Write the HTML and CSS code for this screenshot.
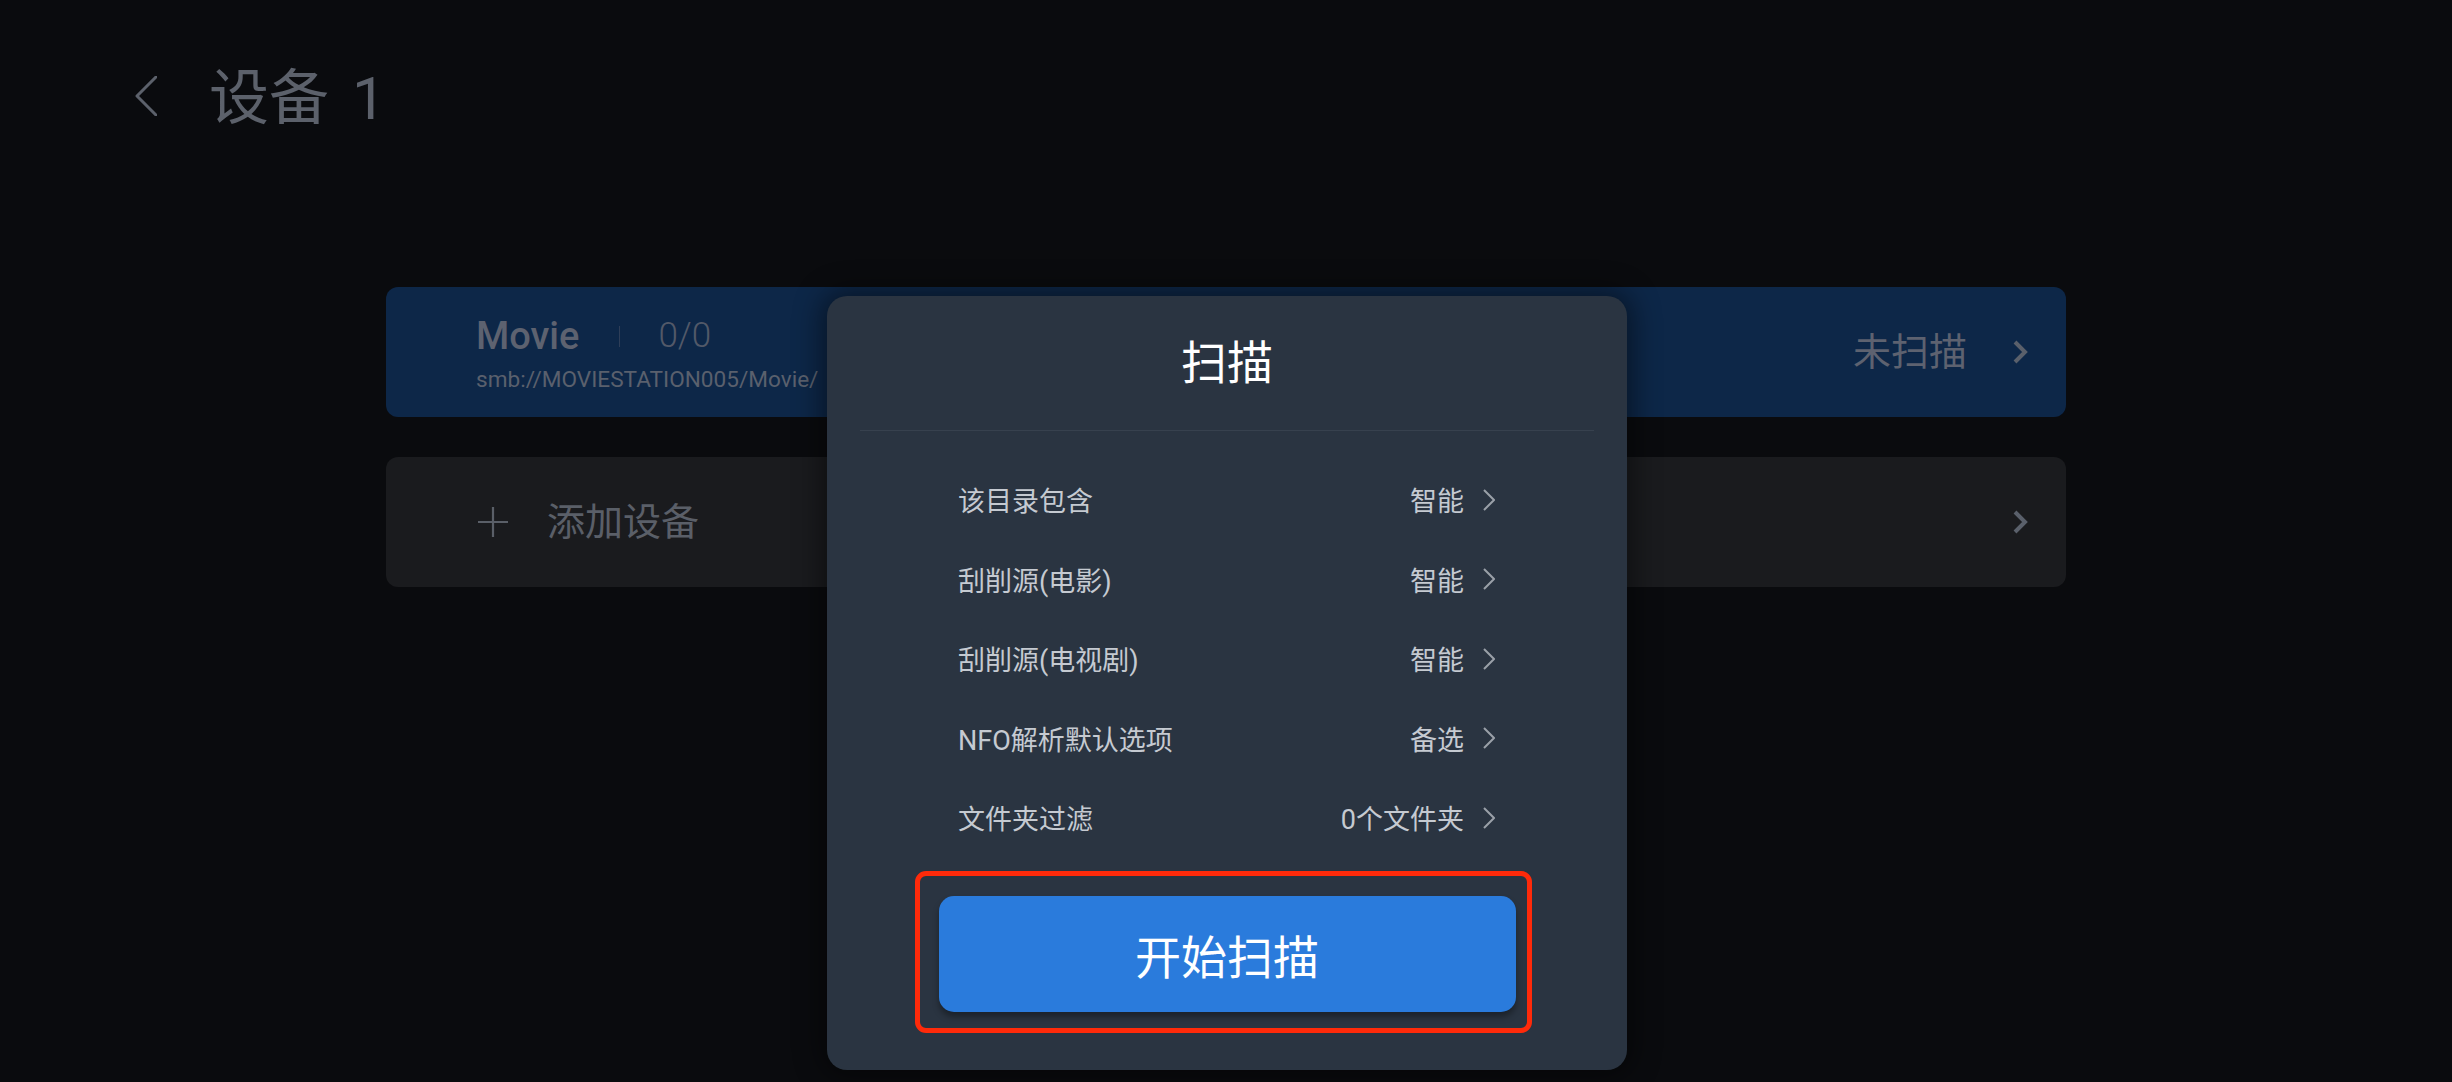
FILE: index.html
```html
<!DOCTYPE html>
<html lang="zh-CN">
<head>
<meta charset="utf-8">
<title>设备 1</title>
<link rel="stylesheet" href="styles.css">
</head>
<body>
<div class="screen">
  <header class="topbar">
    <svg class="back" viewBox="0 0 22 40" width="22" height="40"><polyline points="21,1 2,20 21,39" fill="none" stroke="#5c616b" stroke-width="3" stroke-linecap="round" stroke-linejoin="round"/></svg>
    <h1 class="title">设备 1</h1>
  </header>

  <main class="list">
    <div class="card card-movie">
      <div class="card-info">
        <div class="name-row">
          <span class="name">Movie</span>
          <span class="sep"></span>
          <span class="count">0/0</span>
        </div>
        <div class="path">smb://MOVIESTATION005/Movie/</div>
      </div>
      <span class="status">未扫描</span>
      <svg class="card-chev" viewBox="0 0 16 24" width="16" height="24"><polyline points="3,2 13,12 3,22" fill="none" stroke="#5a606b" stroke-width="4" stroke-linejoin="miter"/></svg>
    </div>
    <div class="card card-add">
      <svg class="plus" viewBox="0 0 30 30" width="30" height="30"><path d="M15 0 V30 M0 15 H30" stroke="#5a5f68" stroke-width="2.2" fill="none"/></svg>
      <span class="add-label">添加设备</span>
      <svg class="card-chev card-chev-add" viewBox="0 0 16 24" width="16" height="24"><polyline points="3,2 13,12 3,22" fill="none" stroke="#5a606b" stroke-width="4" stroke-linejoin="miter"/></svg>
    </div>
  </main>

  <div class="modal">
    <div class="modal-title">扫描</div>
    <div class="divider"></div>
    <div class="rows">
      <div class="row"><span class="label">该目录包含</span><span class="value">智能<svg class="chev" viewBox="0 0 12 22" width="12" height="22"><polyline points="1,1 11,11 1,21" fill="none" stroke="#9aa0a8" stroke-width="2"/></svg></span></div>
      <div class="row"><span class="label">刮削源(电影)</span><span class="value">智能<svg class="chev" viewBox="0 0 12 22" width="12" height="22"><polyline points="1,1 11,11 1,21" fill="none" stroke="#9aa0a8" stroke-width="2"/></svg></span></div>
      <div class="row"><span class="label">刮削源(电视剧)</span><span class="value">智能<svg class="chev" viewBox="0 0 12 22" width="12" height="22"><polyline points="1,1 11,11 1,21" fill="none" stroke="#9aa0a8" stroke-width="2"/></svg></span></div>
      <div class="row"><span class="label">NFO解析默认选项</span><span class="value">备选<svg class="chev" viewBox="0 0 12 22" width="12" height="22"><polyline points="1,1 11,11 1,21" fill="none" stroke="#9aa0a8" stroke-width="2"/></svg></span></div>
      <div class="row"><span class="label">文件夹过滤</span><span class="value">0个文件夹<svg class="chev" viewBox="0 0 12 22" width="12" height="22"><polyline points="1,1 11,11 1,21" fill="none" stroke="#9aa0a8" stroke-width="2"/></svg></span></div>
    </div>
    <div class="btn-wrap">
      <div class="btn">开始扫描</div>
      <div class="highlight"></div>
    </div>
  </div>
</div>
</body>
</html>
```

FILE: styles.css
```css
html, body {
  margin: 0;
  padding: 0;
  background: #0a0b0e;
}

.screen {
  position: relative;
  width: 2452px;
  height: 1082px;
  overflow: hidden;
  background: #0a0b0e;
  font-family: Roboto, "Noto Sans CJK SC", sans-serif;
  box-sizing: border-box;
}

/* header */
.topbar {
  display: flex;
  align-items: center;
  height: 60px;
  padding: 69px 0 0 135px;
}

.back {
  display: block;
  margin-right: 52px;
  margin-top: -6px;
}

.title {
  margin: 0;
  font-size: 60px;
  line-height: 60px;
  font-weight: 400;
  color: #5c616b;
  word-spacing: 8px;
}

/* device list */
.list {
  width: 1680px;
  margin: 158px auto 0;
  display: flex;
  flex-direction: column;
  gap: 40px;
}

.card {
  height: 130px;
  border-radius: 12px;
  display: flex;
  align-items: center;
  box-sizing: border-box;
  padding: 0 38px 0 90px;
}

.card-movie {
  background: #0d2748;
}

.card-add {
  background: #1a1b1e;
  padding-left: 92px;
}

.card-info {
  display: flex;
  flex-direction: column;
  gap: 8px;
  padding-top: 4px;
}

.name-row {
  display: flex;
  align-items: center;
  height: 44px;
}

.name {
  font-size: 38px;
  font-weight: 500;
  color: #5d6270;
  line-height: 44px;
}

.sep {
  width: 1px;
  height: 21px;
  background: #2e3e58;
  margin: 0 38px 0 40px;
}

.count {
  font-size: 35px;
  font-weight: 300;
  color: #525968;
  line-height: 44px;
}

.path {
  font-size: 22.6px;
  line-height: 28px;
  color: #5a606d;
  white-space: nowrap;
}

.status {
  margin-left: auto;
  font-size: 38px;
  color: #5d6270;
  line-height: 44px;
}

.card-chev {
  display: block;
  margin-left: 45px;
}

.card-chev-add {
  margin-left: auto;
}

.plus {
  display: block;
}

.add-label {
  margin-left: 39px;
  font-size: 38px;
  color: #5a5f68;
  line-height: 44px;
}

/* scan dialog */
.modal {
  position: absolute;
  left: 827px;
  top: 296px;
  width: 800px;
  height: 774px;
  background: #2a3441;
  border-radius: 20px;
  box-shadow: 0 0 28px 6px rgba(0, 0, 0, 0.45);
  display: flex;
  flex-direction: column;
}

.modal-title {
  height: 134px;
  display: flex;
  align-items: center;
  justify-content: center;
  font-size: 46px;
  color: #ffffff;
  line-height: 1;
}

.divider {
  height: 1px;
  margin: 0 33px;
  background: #37414e;
}

.rows {
  padding: 29px 132px 0 131px;
}

.row {
  height: 79.5px;
  display: flex;
  align-items: center;
  justify-content: space-between;
  font-size: 27px;
  color: #c5cad1;
}

.value {
  display: flex;
  align-items: center;
}

.chev {
  display: block;
  margin-left: 19px;
}

.btn-wrap {
  position: relative;
  align-self: center;
  margin-top: 38px;
}

.btn {
  width: 577px;
  height: 116px;
  border-radius: 15px;
  background: #2a7bdc;
  color: #ffffff;
  font-size: 46px;
  display: flex;
  align-items: center;
  justify-content: center;
  box-shadow: 0 5px 6px rgba(0, 0, 0, 0.35);
}

.highlight {
  position: absolute;
  left: -24px;
  right: -16px;
  top: -25px;
  bottom: -21px;
  border: 5px solid #ff2a0a;
  border-radius: 11px;
  pointer-events: none;
}
```
